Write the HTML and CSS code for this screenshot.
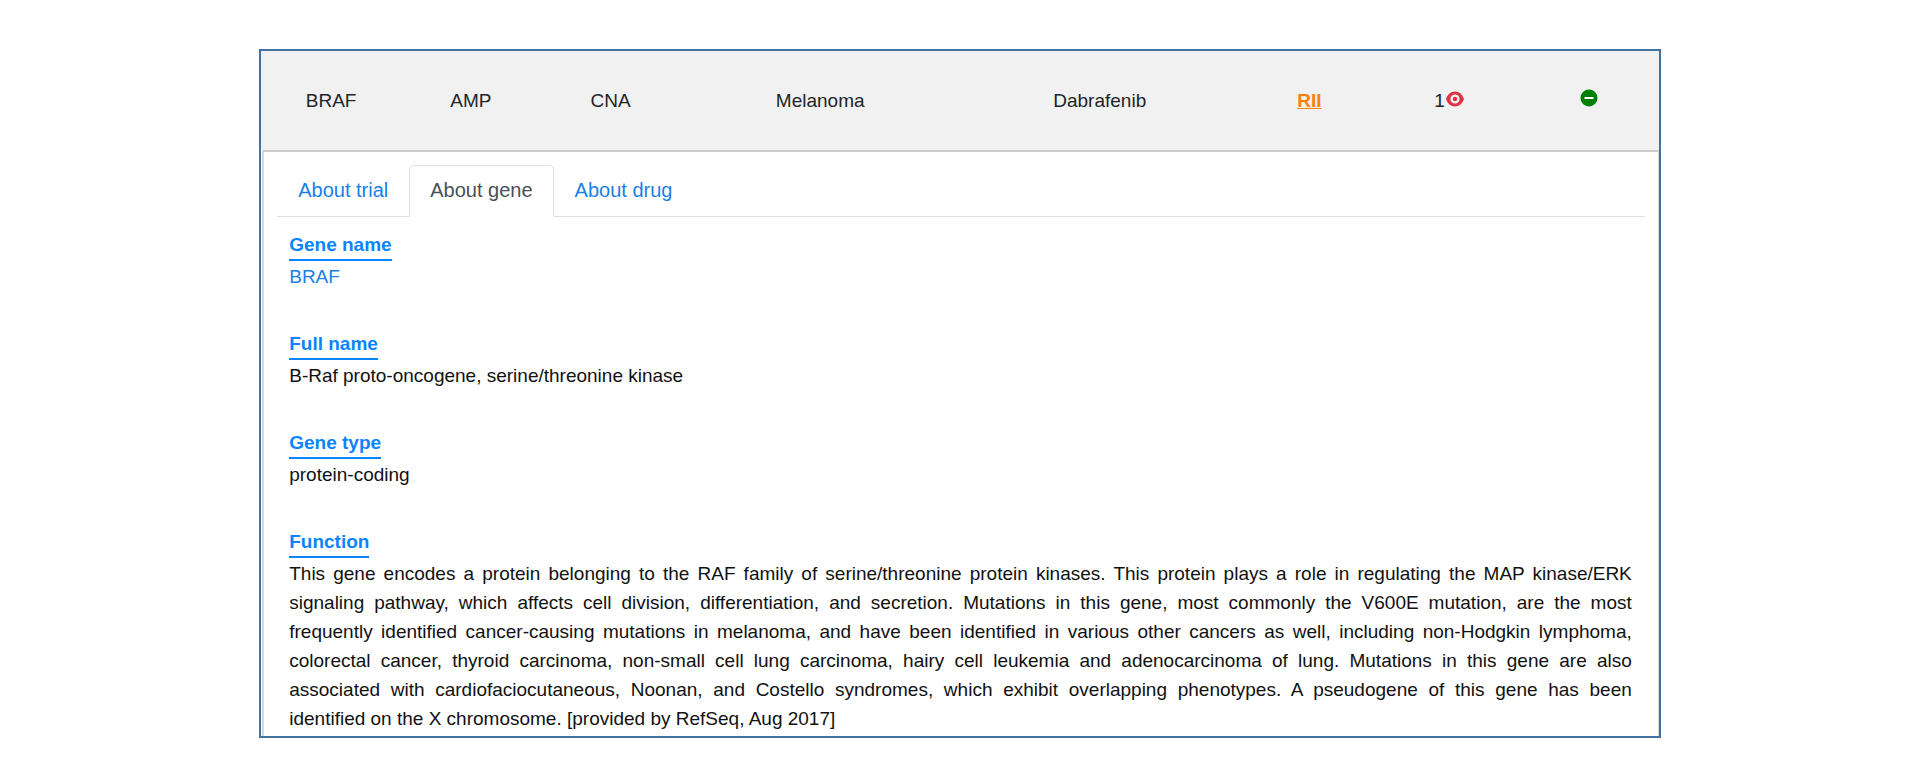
FILE: index.html
```html
<!DOCTYPE html>
<html lang="en">
<head>
<meta charset="utf-8">
<title>BRAF – About gene</title>
<link rel="stylesheet" href="styles.css">
</head>
<body>
<main class="panel">
  <table class="summary">
    <colgroup>
      <col class="col"><col class="col"><col class="col"><col class="col-wide"><col class="col-wide"><col class="col"><col class="col"><col class="col">
    </colgroup>
    <tbody>
      <tr>
        <td>BRAF</td>
        <td>AMP</td>
        <td>CNA</td>
        <td>Melanoma</td>
        <td>Dabrafenib</td>
        <td><a class="level" href="#">RII</a></td>
        <td>
          <span class="evidence">1<button class="icon-button" type="button" aria-label="View evidence"><svg width="18" height="18" viewBox="0 0 18 18" aria-hidden="true"><path fill="#dc3545" fill-rule="evenodd" d="M9 1.500C4.600 1.500 1.500 4.600 0 9c1.500 4.400 4.600 7.500 9 7.500s7.500-3.100 9-7.500C16.500 4.600 13.400 1.500 9 1.500Zm0 2.900a4.600 4.600 0 1 1 0 9.200 4.600 4.600 0 0 1 0-9.200Z"/><circle cx="9" cy="9" r="2.200" fill="#dc3545"/></svg></button></span>
        </td>
        <td>
          <button class="icon-button" type="button" aria-label="Collapse details"><svg width="18" height="18" viewBox="0 0 18 18" aria-hidden="true"><circle cx="9" cy="9" r="8.500" fill="#008000"/><path fill="#fff" d="M4.500 8h9v2h-9z"/></svg></button>
        </td>
      </tr>
    </tbody>
  </table>

  <div class="details">
    <nav class="tabs">
      <a class="tab" href="#">About trial</a>
      <a class="tab tab-active" href="#" aria-current="page">About gene</a>
      <a class="tab" href="#">About drug</a>
    </nav>
    <div class="content">
      <section class="entry">
        <h3 class="heading">Gene name</h3>
        <p class="text"><a class="link" href="#">BRAF</a></p>
      </section>
      <section class="entry">
        <h3 class="heading">Full name</h3>
        <p class="text">B-Raf proto-oncogene, serine/threonine kinase</p>
      </section>
      <section class="entry">
        <h3 class="heading">Gene type</h3>
        <p class="text">protein-coding</p>
      </section>
      <section class="entry">
        <h3 class="heading">Function</h3>
        <p class="text">
          <span class="line">This gene encodes a protein belonging to the RAF family of serine/threonine protein kinases. This protein plays a role in regulating the MAP kinase/ERK</span>
          <span class="line">signaling pathway, which affects cell division, differentiation, and secretion. Mutations in this gene, most commonly the V600E mutation, are the most</span>
          <span class="line">frequently identified cancer-causing mutations in melanoma, and have been identified in various other cancers as well, including non-Hodgkin lymphoma,</span>
          <span class="line">colorectal cancer, thyroid carcinoma, non-small cell lung carcinoma, hairy cell leukemia and adenocarcinoma of lung. Mutations in this gene are also</span>
          <span class="line">associated with cardiofaciocutaneous, Noonan, and Costello syndromes, which exhibit overlapping phenotypes. A pseudogene of this gene has been</span>
          identified on the X chromosome. [provided by RefSeq, Aug 2017]
        </p>
      </section>
    </div>
  </div>
</main>
</body>
</html>
```
FILE: styles.css
```css
* {
  box-sizing: border-box;
}

body {
  margin: 0;
  padding: 49px 0 32px;
  background: #fff;
  color: #111;
  font-family: "Liberation Sans", Arial, sans-serif;
  font-size: 19px;
  line-height: 29px;
}

.panel {
  width: 73%;
  margin: 0 auto;
  border: 2px solid #4472a0;
}

.summary {
  width: 100%;
  table-layout: fixed;
  border-collapse: collapse;
  background: #f1f1f1;
  color: #212529;
  text-align: center;
}

.col {
  width: 10%;
}

.col-wide {
  width: 20%;
}

.summary td {
  padding: 35px 4px;
}

.level {
  color: #ff7f0e;
  font-weight: bold;
  text-decoration: underline;
}

.evidence {
  display: inline-flex;
  align-items: center;
  gap: 1px;
}

.icon-button {
  display: inline-flex;
  padding: 0 0 4px;
  border: 0;
  background: none;
  cursor: pointer;
}

.details {
  margin-left: 1px;
  padding: 13px 13px 3px;
  border: 2px solid #d9d9dc;
  border-top-color: #ccc;
  border-right-width: 1px;
  border-bottom: 0;
}

.tabs {
  display: flex;
  border-bottom: 1px solid #dee2e6;
  font-size: 20px;
}

.tab {
  margin-bottom: -1px;
  padding: 10px 20px 11px;
  border: 1px solid transparent;
  border-radius: 5px 5px 0 0;
  color: #1a7fe8;
  text-decoration: none;
}

.tab-active {
  border-color: #dee2e6 #dee2e6 #fff;
  background: #fff;
  color: #495057;
}

.content {
  display: flex;
  flex-direction: column;
  gap: 38px;
  padding: 13px 13px 0 12px;
}

.heading {
  width: fit-content;
  margin: 0 0 1px;
  border-bottom: 2px solid #0a84ff;
  color: #0a84ff;
  font-size: 19px;
  font-weight: bold;
}

.text {
  margin: 0;
  text-align: justify;
}

.line {
  display: block;
  text-align-last: justify;
}

.link {
  color: #1a7fe8;
  text-decoration: none;
}
```
